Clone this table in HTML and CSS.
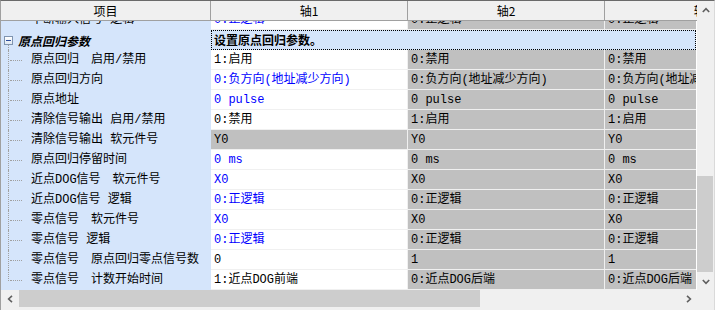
FILE: index.html
```html
<!DOCTYPE html>
<html lang="zh">
<head>
<meta charset="utf-8">
<title>原点回归参数</title>
<link rel="stylesheet" href="styles.css">
</head>
<body>
<div class="window">
  <div class="view">
    <div class="header">
      <div class="hcell h0">项目</div>
      <div class="hcell hv">轴1</div>
      <div class="hcell hv">轴2</div>
      <div class="hcell hv">轴3</div>
    </div>
    <div class="body">
      <div class="rows">
        <div class="row">
          <div class="lbl">中断输入信号 逻辑</div>
          <div class="val w blue">0:正逻辑</div>
          <div class="val g">0:正逻辑</div>
          <div class="val g">0:正逻辑</div>
        </div>
        <div class="row grp">
          <div class="lbl"><span class="toggle"></span><span class="gtitle">原点回归参数</span></div>
          <div class="gval">设置原点回归参数。</div>
        </div>
        <div class="row child">
          <div class="lbl">原点回归　启用/禁用</div>
          <div class="val w">1:启用</div>
          <div class="val g">0:禁用</div>
          <div class="val g">0:禁用</div>
        </div>
        <div class="row child">
          <div class="lbl">原点回归方向</div>
          <div class="val w blue">0:负方向(地址减少方向)</div>
          <div class="val g">0:负方向(地址减少方向)</div>
          <div class="val g">0:负方向(地址减少方向)</div>
        </div>
        <div class="row child">
          <div class="lbl">原点地址</div>
          <div class="val w blue">0 pulse</div>
          <div class="val g">0 pulse</div>
          <div class="val g">0 pulse</div>
        </div>
        <div class="row child">
          <div class="lbl">清除信号输出 启用/禁用</div>
          <div class="val w">0:禁用</div>
          <div class="val g">1:启用</div>
          <div class="val g">1:启用</div>
        </div>
        <div class="row child">
          <div class="lbl">清除信号输出 软元件号</div>
          <div class="val g">Y0</div>
          <div class="val g">Y0</div>
          <div class="val g">Y0</div>
        </div>
        <div class="row child">
          <div class="lbl">原点回归停留时间</div>
          <div class="val w blue">0 ms</div>
          <div class="val g">0 ms</div>
          <div class="val g">0 ms</div>
        </div>
        <div class="row child">
          <div class="lbl">近点DOG信号　软元件号</div>
          <div class="val w blue">X0</div>
          <div class="val g">X0</div>
          <div class="val g">X0</div>
        </div>
        <div class="row child">
          <div class="lbl">近点DOG信号 逻辑</div>
          <div class="val w blue">0:正逻辑</div>
          <div class="val g">0:正逻辑</div>
          <div class="val g">0:正逻辑</div>
        </div>
        <div class="row child">
          <div class="lbl">零点信号　软元件号</div>
          <div class="val w blue">X0</div>
          <div class="val g">X0</div>
          <div class="val g">X0</div>
        </div>
        <div class="row child">
          <div class="lbl">零点信号 逻辑</div>
          <div class="val w blue">0:正逻辑</div>
          <div class="val g">0:正逻辑</div>
          <div class="val g">0:正逻辑</div>
        </div>
        <div class="row child">
          <div class="lbl">零点信号　原点回归零点信号数</div>
          <div class="val w">0</div>
          <div class="val g">1</div>
          <div class="val g">1</div>
        </div>
        <div class="row child last">
          <div class="lbl">零点信号　计数开始时间</div>
          <div class="val w">1:近点DOG前端</div>
          <div class="val g">0:近点DOG后端</div>
          <div class="val g">0:近点DOG后端</div>
        </div>
      </div>
    </div>
  </div>
  <div class="vscroll">
    <div class="sbtn"><svg width="8" height="6" viewBox="0 0 8 6"><polyline points="0.8,5 4,1.6 7.2,5" fill="none" stroke="#606060" stroke-width="1.6"/></svg></div>
    <div class="vspace"></div>
    <div class="vthumb"></div>
    <div class="sbtn"><svg width="8" height="6" viewBox="0 0 8 6"><polyline points="0.8,1 4,4.4 7.2,1" fill="none" stroke="#606060" stroke-width="1.6"/></svg></div>
  </div>
  <div class="hscroll">
    <div class="sbtn hbtn"><svg width="6" height="8" viewBox="0 0 6 8"><polyline points="5,0.8 1.6,4 5,7.2" fill="none" stroke="#606060" stroke-width="1.6"/></svg></div>
    <div class="hthumb"></div>
    <div class="hspace"></div>
    <div class="sbtn hbtn"><svg width="6" height="8" viewBox="0 0 6 8"><polyline points="1,0.8 4.4,4 1,7.2" fill="none" stroke="#606060" stroke-width="1.6"/></svg></div>
  </div>
  <div class="corner"></div>
</div>
</body>
</html>
```
FILE: styles.css
```css
* { box-sizing: border-box; }
html, body { margin: 0; padding: 0; background: #f0f0f0; }

.window {
  width: 715px;
  height: 310px;
  border-top: 1px solid #6a6a6a;
  border-left: 1px solid #a0a0a0;
  border-right: 1px solid #dadada;
  display: grid;
  grid-template-columns: 696px 17px;
  grid-template-rows: 289px 17px;
  align-content: start;
  background: #f0f0f0;
  font-family: "Liberation Mono", "Noto Sans CJK SC", monospace;
  font-size: 12px;
  color: #000;
}

.view {
  grid-column: 1;
  grid-row: 1;
  overflow: hidden;
  display: flex;
  flex-direction: column;
}

.header {
  flex: none;
  height: 20px;
  display: flex;
  border-bottom: 1px solid #a0a0a0;
  background: #f0f0f0;
  font-family: "Noto Sans CJK SC", sans-serif;
}
.hcell {
  flex: none;
  border-right: 1px solid #a0a0a0;
  text-align: center;
  line-height: 19px;
  white-space: nowrap;
}
.h0 { width: 210px; }
.hv { width: 197px; }

.body {
  flex: 1;
  overflow: hidden;
  border-right: 1px solid #ffffff;
}
.rows { margin-top: -11px; }

.row {
  display: flex;
  height: 20px;
}

.lbl {
  flex: none;
  width: 210px;
  background: #d5e5fb;
  position: relative;
  padding-left: 30px;
  padding-top: 1px;
  line-height: 19px;
  white-space: nowrap;
}

.val {
  flex: none;
  width: 197px;
  border-right: 1px solid #f0f0f0;
  border-bottom: 1px solid #f0f0f0;
  padding-left: 3px;
  padding-top: 2px;
  line-height: 17px;
  white-space: nowrap;
  overflow: hidden;
}
.w { background: #ffffff; }
.g { background: #c0c0c0; }
.blue { color: #0000ff; }

/* group row */
.grp .lbl {
  display: flex;
  align-items: center;
  padding-left: 3px;
  padding-top: 0;
}
.toggle {
  position: relative;
  flex: none;
  width: 9px;
  height: 9px;
  margin-right: 5px;
  border: 1px solid #7f94b0;
  background: linear-gradient(#ffffff, #dfe7f1);
}
.toggle::after {
  content: "";
  position: absolute;
  left: 1px;
  top: 3px;
  width: 5px;
  height: 1px;
  background: #2a4c9c;
}
.gtitle {
  font-family: "Noto Sans CJK SC", sans-serif;
  font-weight: bold;
  font-style: italic;
}
.grp .lbl::before {
  content: "";
  position: absolute;
  left: 7px;
  top: 15px;
  bottom: 0;
  border-left: 1px dotted #a0a0a0;
}
.gval {
  flex: 1;
  background: #d5e5fb;
  border: 1px dotted #000;
  padding-left: 2px;
  line-height: 18px;
  font-family: "Noto Sans CJK SC", sans-serif;
  font-weight: bold;
  white-space: nowrap;
}

/* tree lines */
.child .lbl::before {
  content: "";
  position: absolute;
  left: 7px;
  top: 0;
  bottom: 0;
  border-left: 1px dotted #a0a0a0;
}
.child.last .lbl::before { bottom: 9px; }
.child .lbl::after {
  content: "";
  position: absolute;
  left: 9px;
  top: 10px;
  width: 12px;
  border-top: 1px dotted #a0a0a0;
}

/* scrollbars */
.vscroll {
  grid-column: 2;
  grid-row: 1;
  display: flex;
  flex-direction: column;
  background: #f0f0f0;
}
.sbtn {
  flex: none;
  height: 17px;
  display: flex;
  align-items: center;
  justify-content: center;
}
.vspace { flex: 1; }
.vthumb {
  flex: none;
  height: 96px;
  margin-right: 1px;
  margin-bottom: 1px;
  background: #cdcdcd;
}

.hscroll {
  grid-column: 1;
  grid-row: 2;
  display: flex;
  background: #f0f0f0;
}
.hbtn { width: 17px; height: 17px; }
.hthumb {
  flex: none;
  width: 461px;
  margin-left: 1px;
  background: #cdcdcd;
}
.hspace { flex: 1; }
.corner {
  grid-column: 2;
  grid-row: 2;
  background: #f0f0f0;
}
```
